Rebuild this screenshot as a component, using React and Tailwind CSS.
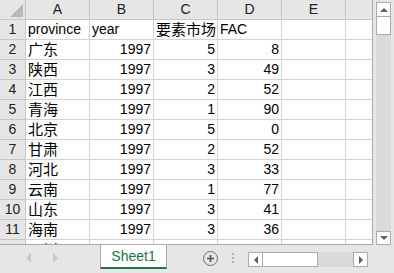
import React from "react";

const cols = ["A", "B", "C", "D", "E", ""];
const rows = [
    ["province", "year", "要素市场", "FAC"],
    ["广东", 1997, 5, 8],
    ["陕西", 1997, 3, 49],
    ["江西", 1997, 2, 52],
    ["青海", 1997, 1, 90],
    ["北京", 1997, 5, 0],
    ["甘肃", 1997, 2, 52],
    ["河北", 1997, 3, 33],
    ["云南", 1997, 1, 77],
    ["山东", 1997, 3, 41],
    ["海南", 1997, 3, 36],
    ["四川", "", "", ""],
];

const Cell = ({ value }) => {
    const isNum = typeof value === "number";
    const isCjk = typeof value === "string" && /[\u4e00-\u9fff]/.test(value);
    return (
        <div
            className={`w-[64px] h-[20px] shrink-0 border-r border-b border-[#d4d4d4] flex items-end pb-[1px] whitespace-nowrap overflow-visible leading-[17px] ${
                isNum ? "justify-end pr-[2px]" : "pl-[2px]"
            } ${isCjk ? "text-[15px]" : "text-[14px]"}`}
        >
            {value}
        </div>
    );
};

const App = () => {
    return (
        <div
            className="w-[394px] h-[273px] overflow-hidden bg-white text-black flex flex-col"
            style={{ fontFamily: '"Liberation Sans", "Noto Sans CJK SC", sans-serif' }}
        >
            {/* Grid + vertical scrollbar */}
            <div className="flex h-[245px] shrink-0">
                <div className="w-[373px] h-[245px] overflow-hidden border-r border-b border-[#ababab] shrink-0">
                    {/* Column headers */}
                    <div className="flex h-[20px] bg-[#e6e6e6]">
                        <div className="w-[26px] h-[20px] shrink-0 border-r border-b border-[#c6c6c6] relative">
                            <div
                                className="absolute left-[10px] top-[4px] w-[13px] h-[13px] bg-[#b9b9b9]"
                                style={{ clipPath: "polygon(100% 0, 100% 100%, 0 100%)" }}
                            />
                        </div>
                        {cols.map((c, i) => (
                            <div
                                key={i}
                                className="w-[64px] h-[20px] shrink-0 border-r border-b border-[#c6c6c6] flex items-center justify-center text-[14px] text-[#222]"
                            >
                                {c}
                            </div>
                        ))}
                    </div>

                    {/* Rows */}
                    {rows.map((row, r) => (
                        <div key={r} className="flex h-[20px]">
                            <div className="w-[26px] h-[20px] shrink-0 bg-[#e6e6e6] border-r border-b border-[#c6c6c6] flex items-center justify-center text-[14px] text-[#222]">
                                {r + 1}
                            </div>
                            {row.map((v, i) => (
                                <Cell key={i} value={v} />
                            ))}
                            <Cell value="" />
                            <Cell value="" />
                        </div>
                    ))}
                </div>

                {/* Vertical scrollbar */}
                <div className="w-[21px] h-[245px] bg-[#e6e6e6] flex flex-col items-center pt-[2px] pb-0">
                    <div className="w-[15px] h-[15px] bg-white border border-[#ababab] flex items-center justify-center">
                        <div className="w-0 h-0 border-l-[4px] border-r-[4px] border-b-[4px] border-l-transparent border-r-transparent border-b-[#606060]" />
                    </div>
                    <div className="w-[15px] h-[18px] bg-white border border-[#ababab] border-t-0" />
                    <div className="flex-1 w-[15px] bg-[#dadada]" />
                    <div className="w-[15px] h-[14px] bg-white border border-[#ababab] flex items-center justify-center">
                        <div className="w-0 h-0 border-l-[4px] border-r-[4px] border-t-[4px] border-l-transparent border-r-transparent border-t-[#606060]" />
                    </div>
                </div>
            </div>

            {/* Sheet tab bar */}
            <div className="flex h-[28px] bg-[#e6e6e6] items-start">
                <div className="w-[100px] h-full flex items-center pl-[26px] gap-[22px] pb-[2px]">
                    <div className="w-0 h-0 border-t-[5px] border-b-[5px] border-r-[5px] border-t-transparent border-b-transparent border-r-[#c8c8c8]" />
                    <div className="w-0 h-0 border-t-[5px] border-b-[5px] border-l-[5px] border-t-transparent border-b-transparent border-l-[#c8c8c8]" />
                </div>
                <div className="w-[67px] h-[24px] bg-white border-l border-r border-[#ababab] border-b-2 border-b-[#217346] flex items-center justify-center text-[14px] text-[#217346]">
                    Sheet1
                </div>
                <div className="w-[36px]" />
                <div className="w-[15px] h-[15px] mt-[6px] rounded-full border border-[#707070] flex items-center justify-center">
                    <svg width="9" height="9" viewBox="0 0 9 9">
                        <path d="M4.5 1v7M1 4.5h7" stroke="#505050" strokeWidth="1.6" />
                    </svg>
                </div>
                <div className="w-[14px]" />
                <div className="flex flex-col gap-[2px] mt-[8px]">
                    <div className="w-[2px] h-[2px] bg-[#b0b0b0]" />
                    <div className="w-[2px] h-[2px] bg-[#b0b0b0]" />
                    <div className="w-[2px] h-[2px] bg-[#b0b0b0]" />
                </div>
                <div className="w-[14px]" />
                {/* Horizontal scrollbar */}
                <div className="flex mt-[7px] h-[15px]">
                    <div className="w-[15px] h-[15px] bg-white border border-[#ababab] flex items-center justify-center">
                        <div className="w-0 h-0 border-t-[4px] border-b-[4px] border-r-[4px] border-t-transparent border-b-transparent border-r-[#606060]" />
                    </div>
                    <div className="w-[55px] h-[15px] bg-white border-t border-b border-r border-[#ababab]" />
                    <div className="w-[35px] h-[15px] bg-[#dadada]" />
                    <div className="w-[15px] h-[15px] bg-white border border-[#ababab] flex items-center justify-center">
                        <div className="w-0 h-0 border-t-[4px] border-b-[4px] border-l-[4px] border-t-transparent border-b-transparent border-l-[#606060]" />
                    </div>
                </div>
            </div>
        </div>
    );
};

export default App;
